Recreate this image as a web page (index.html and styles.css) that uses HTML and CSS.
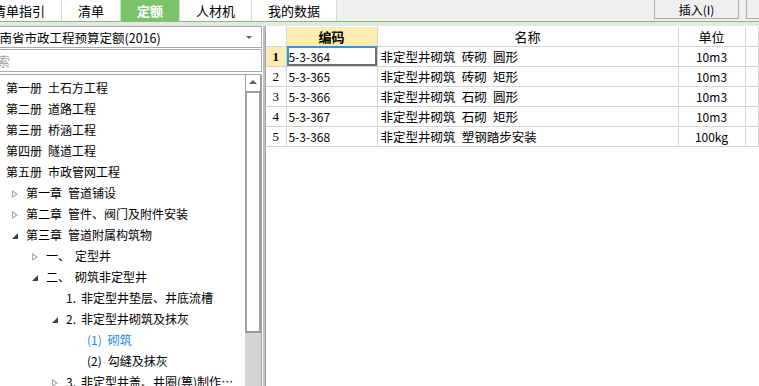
FILE: index.html
```html
<!DOCTYPE html>
<html>
<head>
<meta charset="UTF-8">
<meta name="viewport" content="width=device-width, initial-scale=1.0">
<title>定额</title>
<link rel="stylesheet" href="styles.css">
</head>
<body>
    <div class="topbar">
        <div class="tab first">清单指引</div>
        <div class="tab">清单</div>
        <div class="tab active">定额</div>
        <div class="tab">人材机</div>
        <div class="tab">我的数据</div>
        <div class="tools">
            <button class="btn">插入(I)</button>
            <button class="btn btn-more"></button>
        </div>
    </div>
    <div class="strip"></div>

    <div class="main">
        <div class="left">
            <div class="select">
                <span class="select-text">河南省市政工程预算定额(2016)</span>
                <i class="caret"></i>
            </div>
            <div class="search">搜索</div>
            <div class="tree">
                <ul class="tree-list">
                    <li class="l0"><span class="n">第一册</span>土石方工程</li>
                    <li class="l0"><span class="n">第二册</span>道路工程</li>
                    <li class="l0"><span class="n">第三册</span>桥涵工程</li>
                    <li class="l0"><span class="n">第四册</span>隧道工程</li>
                    <li class="l0"><span class="n">第五册</span>市政管网工程</li>
                    <li class="l1"><i class="arrow closed"></i><span class="n">第一章</span>管道铺设</li>
                    <li class="l1"><i class="arrow closed"></i><span class="n">第二章</span>管件、阀门及附件安装</li>
                    <li class="l1"><i class="arrow open"></i><span class="n">第三章</span>管道附属构筑物</li>
                    <li class="l2"><i class="arrow closed"></i><span class="n wide">一、</span>定型井</li>
                    <li class="l2"><i class="arrow open"></i><span class="n wide">二、</span>砌筑非定型井</li>
                    <li class="l3"><i class="arrow"></i><span class="n num">1.</span>非定型井垫层、井底流槽</li>
                    <li class="l3"><i class="arrow open"></i><span class="n num">2.</span>非定型井砌筑及抹灰</li>
                    <li class="l4 current"><span class="n">(1)</span>砌筑</li>
                    <li class="l4"><span class="n">(2)</span>勾缝及抹灰</li>
                    <li class="l3"><i class="arrow closed"></i><span class="n num">3.</span>非定型井盖、井圈(箅)制作、安装</li>
                </ul>
                <div class="vscroll">
                    <div class="vscroll-up"></div>
                    <div class="vscroll-thumb"></div>
                    <div class="vscroll-track"></div>
                </div>
            </div>
        </div>

        <div class="splitter"></div>

        <div class="right">
            <table class="grid">
                <colgroup>
                    <col class="c-no">
                    <col class="c-code">
                    <col class="c-name">
                    <col class="c-unit">
                    <col>
                </colgroup>
                <tr>
                    <th></th>
                    <th class="hl">编码</th>
                    <th>名称</th>
                    <th>单位</th>
                    <th></th>
                </tr>
                <tr>
                    <td class="no hl">1</td>
                    <td class="code sel">5-3-364</td>
                    <td class="name">非定型井砌筑&ensp;砖砌&ensp;圆形</td>
                    <td class="unit">10m3</td>
                    <td></td>
                </tr>
                <tr>
                    <td class="no">2</td>
                    <td class="code">5-3-365</td>
                    <td class="name">非定型井砌筑&ensp;砖砌&ensp;矩形</td>
                    <td class="unit">10m3</td>
                    <td></td>
                </tr>
                <tr>
                    <td class="no">3</td>
                    <td class="code">5-3-366</td>
                    <td class="name">非定型井砌筑&ensp;石砌&ensp;圆形</td>
                    <td class="unit">10m3</td>
                    <td></td>
                </tr>
                <tr>
                    <td class="no">4</td>
                    <td class="code">5-3-367</td>
                    <td class="name">非定型井砌筑&ensp;石砌&ensp;矩形</td>
                    <td class="unit">10m3</td>
                    <td></td>
                </tr>
                <tr>
                    <td class="no">5</td>
                    <td class="code">5-3-368</td>
                    <td class="name">非定型井砌筑&ensp;塑钢踏步安装</td>
                    <td class="unit">100kg</td>
                    <td></td>
                </tr>
            </table>
        </div>
    </div>
</body>
</html>
```

FILE: styles.css
```css
body {
    margin: 0;
    width: 759px;
    height: 386px;
    overflow: hidden;
    background-color: #ffffff;
    color: #000000;
    font-family: "Noto Sans CJK SC", "Noto Sans", sans-serif;
    font-size: 12px;
}

/* Barra de abas */
.topbar {
    display: flex;
    height: 21px;
    background-color: #f0f0f0;
    border-bottom: 1px solid #7cc46c;
}
.tab {
    flex: none;
    padding: 0 16px;
    line-height: 21px;
    font-size: 13px;
    background-color: #ffffff;
    border-right: 1px solid #c9e6c0;
}
.tab.first {
    margin-left: -23px;
}
.tab.active {
    background-color: #7cc46c;
    color: #ffffff;
    font-weight: bold;
}
.tools {
    margin-left: auto;
    display: flex;
    gap: 7px;
}
.btn {
    height: 20px;
    margin-top: -1px;
    width: 85px;
    padding: 0;
    border: 1px solid #adadad;
    background-color: #efefef;
    font-family: inherit;
    font-size: 12px;
    color: #000000;
}
.btn-more {
    width: 24px;
    margin-right: -11px;
}
.strip {
    height: 4px;
    background-color: #e6e6e6;
}

.main {
    display: flex;
    height: 360px;
}

/* Painel esquerdo */
.left {
    flex: none;
    width: 270px;
    margin-left: -8px;
    display: flex;
    flex-direction: column;
}
.select {
    height: 20px;
    margin-bottom: 1px;
    border: 1px solid #a9a9a9;
    border-left: none;
    display: flex;
    align-items: center;
    overflow: hidden;
}
.select-text {
    flex: 1;
    margin-left: -5px;
    white-space: nowrap;
    font-size: 12.5px;
}
.caret {
    width: 0;
    height: 0;
    margin-right: 9px;
    border-left: 3px solid transparent;
    border-right: 3px solid transparent;
    border-top: 3px solid #606060;
}
.search {
    height: 21px;
    line-height: 21px;
    margin-bottom: 2px;
    border: 1px solid #a9a9a9;
    border-left: none;
    color: #a0a0a0;
    text-indent: -8px;
    font-size: 13px;
    overflow: hidden;
    white-space: nowrap;
}
.tree {
    flex: 1;
    display: flex;
    border-top: 1px solid #a0a0a0;
    border-right: 1px solid #a0a0a0;
    min-height: 0;
}
.tree-list {
    flex: 1;
    min-width: 0;
    list-style: none;
    margin: 0;
    padding: 2px 0 0 0;
    padding-right: 1px;
}
.tree-list li {
    height: 21px;
    line-height: 21px;
    white-space: nowrap;
    overflow: hidden;
    text-overflow: ellipsis;
}
.tree-list .l0 { padding-left: 14px; }
.tree-list .l1 { padding-left: 20px; }
.tree-list .l2 { padding-left: 40px; }
.tree-list .l3 { padding-left: 60px; }
.tree-list .l4 { padding-left: 95px; }
.tree-list .current {
    color: #1a8ce6;
}
.n {
    margin-right: 6px;
}
.n.wide {
    margin-right: 5px;
}
.n.num {
    margin-right: 5px;
}
.arrow {
    display: inline-block;
    width: 14px;
    height: 9px;
    vertical-align: -1px;
    position: relative;
}
.arrow.closed::before {
    content: "";
    position: absolute;
    left: 0;
    top: 0;
    border-top: 4.5px solid transparent;
    border-bottom: 4.5px solid transparent;
    border-left: 6px solid #a8a8a8;
}
.arrow.closed::after {
    content: "";
    position: absolute;
    left: 1px;
    top: 2px;
    border-top: 2.5px solid transparent;
    border-bottom: 2.5px solid transparent;
    border-left: 3.5px solid #ffffff;
}
.arrow.open::before {
    content: "";
    position: absolute;
    left: 0;
    top: 1px;
    border-left: 6px solid transparent;
    border-bottom: 6px solid #404040;
}

/* Barra de rolagem */
.vscroll {
    flex: none;
    width: 16px;
    display: flex;
    flex-direction: column;
}
.vscroll-up {
    height: 16px;
    border: 1px solid #a0a0a0;
    border-top: none;
    background-color: #ffffff;
    position: relative;
}
.vscroll-up::before {
    content: "";
    position: absolute;
    left: 3px;
    top: 5px;
    border-left: 4px solid transparent;
    border-right: 4px solid transparent;
    border-bottom: 4px solid #606060;
}
.vscroll-thumb {
    height: 238px;
    border: 1px solid #a0a0a0;
    border-left-width: 2px;
    border-right-width: 2px;
    border-bottom: 2px solid #999999;
    background-color: #ffffff;
}
.vscroll-track {
    flex: 1;
    background-color: #d4d4d4;
}

.splitter {
    flex: none;
    width: 2px;
    border-left: 1px solid #ffffff;
    background-color: #b7c2cd;
}

/* Tabela de resultados */
.right {
    flex: 1;
    min-width: 0;
    border-left: 1px solid #a0a0a0;
    padding-top: 1px;
}
.grid {
    width: 100%;
    border-collapse: collapse;
    table-layout: fixed;
}
.c-no { width: 20px; }
.c-code { width: 91px; }
.c-name { width: 301px; }
.c-unit { width: 67px; }
.grid th, .grid td {
    border-right: 1px solid #d4d4d4;
    border-bottom: 1px solid #d4d4d4;
    padding: 0;
    white-space: nowrap;
    overflow: hidden;
}
.grid th {
    height: 19px;
    font-weight: normal;
    font-size: 13px;
    text-align: center;
}
.grid th.hl {
    font-weight: bold;
    border-bottom: 1px solid #2d9ad6;
}
.grid td {
    height: 18px;
}
.grid .hl {
    background-color: #fdecb3;
}
.grid .no {
    text-align: center;
    font-family: "Liberation Serif", serif;
    font-size: 13px;
}
.grid .no.hl {
    font-weight: bold;
}
.grid .code {
    padding-left: 2px;
}
.grid .name {
    padding-left: 3px;
    font-size: 12.5px;
}
.grid .unit {
    text-align: center;
}
.grid .sel {
    box-shadow: inset 2px 1px 0 #2d9ad6, inset -2px -2px 0 #6e6e6e;
}
```
